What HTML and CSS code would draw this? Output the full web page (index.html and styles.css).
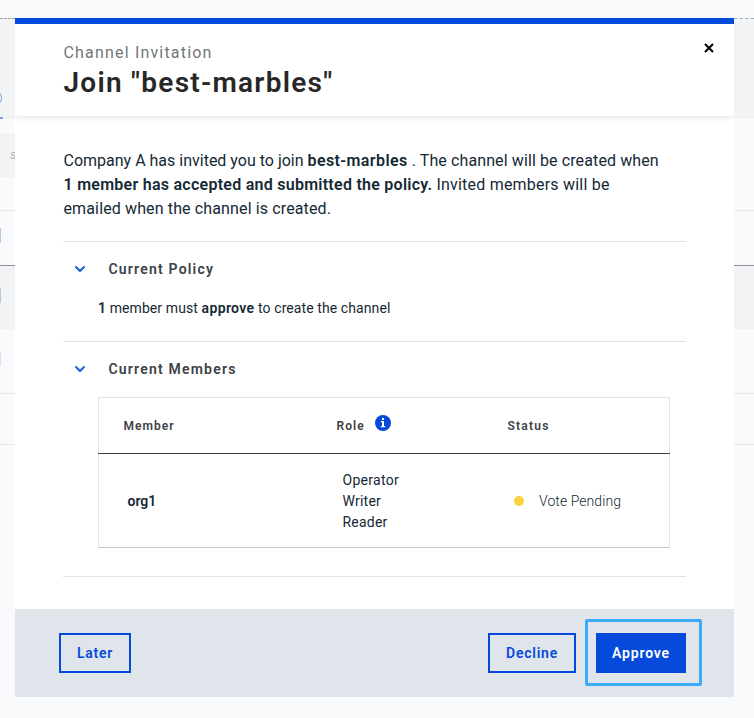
FILE: index.html
```html
<!DOCTYPE html>
<html lang="en">
<head>
<meta charset="utf-8">
<title>Channel Invitation</title>
<link rel="stylesheet" href="styles.css">
</head>
<body>
<div class="page">
  <div class="edge edge-left" aria-hidden="true">
    <div class="band band-nav"><i class="ring"></i><i class="tab-line"></i></div>
    <div class="band band-gap"></div>
    <div class="band band-search shaded"><em>s</em></div>
    <div class="band band-head ruled"></div>
    <div class="band band-row dark-ruled"><i class="chip"></i></div>
    <div class="band band-active shaded"><i class="chip"></i></div>
    <div class="band band-last ruled"><i class="chip faint"></i></div>
    <div class="band band-foot ruled"></div>
  </div>

  <section class="modal" role="dialog" aria-labelledby="title">
    <header class="modal-header">
      <div>
        <p class="eyebrow">Channel Invitation</p>
        <h1 id="title">Join "best-marbles"</h1>
      </div>
      <button class="close" aria-label="Close">
        <svg width="10" height="10" viewBox="0 0 10 10"><path d="M1 1l8 8M9 1L1 9"/></svg>
      </button>
    </header>

    <div class="modal-body">
      <p class="intro">Company A has invited you to join <b class="channel">best-marbles</b><span class="created"> . The channel will be created when</span><br><b>1 member has accepted and submitted the policy.</b><span class="invited"> Invited members will be</span><br><span class="emailed">emailed when the channel is created.</span></p>

      <section class="panel panel-policy">
        <h2><svg class="chevron" width="12" height="8" viewBox="0 0 12 8"><path d="M1.500 1.500L6 6l4.500-4.500"/></svg>Current Policy</h2>
        <p class="policy"><b>1</b> member must <b class="verb">approve</b> to create the channel</p>
      </section>

      <section class="panel panel-members">
        <h2><svg class="chevron" width="12" height="8" viewBox="0 0 12 8"><path d="M1.500 1.500L6 6l4.500-4.500"/></svg>Current Members</h2>
        <div class="members">
          <div class="row head">
            <span>Member</span>
            <span class="role-head">Role
              <svg class="info" width="16" height="16" viewBox="0 0 16 16"><circle cx="8" cy="8" r="8"/><path d="M7 3h2v2H7zM6 6h3v5h1.200v1.200H5.800V11H7V7.200H6z"/></svg>
            </span>
            <span class="status-head">Status</span>
          </div>
          <div class="row entry">
            <b>org1</b>
            <ul class="roles"><li class="operator">Operator</li><li>Writer</li><li>Reader</li></ul>
            <span class="status"><i class="dot"></i>Vote Pending</span>
          </div>
        </div>
      </section>
    </div>

    <footer class="modal-footer">
      <button class="btn later">Later</button>
      <div class="actions">
        <button class="btn decline">Decline</button>
        <button class="btn primary">Approve</button>
      </div>
    </footer>
  </section>

  <div class="edge" aria-hidden="true">
    <div class="band band-nav"></div>
    <div class="band band-gap"></div>
    <div class="band band-search"></div>
    <div class="band band-head ruled"></div>
    <div class="band band-row dark-ruled"></div>
    <div class="band band-active shaded"></div>
    <div class="band band-last ruled"></div>
    <div class="band band-foot ruled"></div>
  </div>
</div>
</body>
</html>
```
FILE: styles.css
```css
* { box-sizing: border-box; }
body {
  margin: 0;
  background: #f8fafc;
  color: #152935;
  font-family: Roboto, "Liberation Sans", sans-serif;
}
p, h1, h2, ul { margin: 0; padding: 0; }
b { font-weight: 600; }
button { font-family: inherit; border: 0; padding: 0; }

.page {
  display: grid;
  grid-template-columns: 15px 719px 20px;
  height: 718px;
  padding-top: 18px;
  overflow: hidden;
}

/* Dimmed page behind the dialog */
.edge { overflow: hidden; }
.band { overflow: hidden; }
.shaded { background: #f1f3f5; }
.ruled { border-bottom: 1px solid #e4e7ea; }
.dark-ruled { border-bottom: 1px solid #8d9196; }
.band-nav { height: 101px; background: #f1f3f5; border-top: 1px dashed #9da6ac; }
.band-gap { height: 14px; }
.band-search { height: 44px; padding: 14px 0 0 10px; color: #b5b2b0; font-size: 13px; line-height: 16px; }
.band-head { height: 34px; }
.band-row { height: 55px; padding-top: 17px; }
.band-active { height: 63px; padding-top: 22px; }
.band-last { height: 65px; padding-top: 22px; }
.band-foot { height: 51px; }
.ring { display: block; width: 10px; height: 12px; margin: 73px 0 0 -8px; border: 1.5px solid #7ba3ec; border-radius: 50%; }
.tab-line { display: block; width: 3px; height: 2px; margin-top: 13px; background: #7b9eea; }
.chip { display: block; width: 1px; height: 15px; background: #bcc6d7; }
.faint { background: #dce1ea; }

.modal { height: 679px; background: #fff; border-top: 6px solid #054ada; }
.modal-header {
  display: flex;
  justify-content: space-between;
  height: 92px;
  padding: 18px 20px 0 48.5px;
  box-shadow: 0 1px 6px rgba(40, 55, 70, .14);
  clip-path: inset(0 0 -8px 0);
}
.eyebrow { color: #6f7878; font-size: 16px; line-height: 21px; letter-spacing: 1.18px; }
h1 { color: #272727; font-size: 28px; line-height: 39px; font-weight: 600; letter-spacing: 1.26px; }
.close { display: flex; width: 10px; height: 10px; margin-top: 1px; background: none; }
.close path { fill: none; stroke: #000; stroke-width: 2; }

.modal-body { height: 493px; padding: 33px 48px 0; }
.intro { padding-left: .5px; font-size: 16px; line-height: 24px; white-space: nowrap; }
.intro b { letter-spacing: .26px; }
.intro .channel { letter-spacing: .39px; }
.created { letter-spacing: .11px; }
.invited { letter-spacing: .21px; }
.emailed { letter-spacing: .13px; }

.panel { border-top: 1px solid #dfe3e6; }
.panel-policy { height: 100px; margin-top: 20px; }
.panel-members { height: 236px; border-bottom: 1px solid #dfe3e6; }
h2 {
  display: flex;
  align-items: center;
  gap: 22.5px;
  height: 54px;
  margin-bottom: 1px;
  padding-left: 11px;
  color: #3c4146;
  font-size: 14px;
  font-weight: 600;
  letter-spacing: 1.2px;
}
.chevron path { fill: none; stroke: #1f5ce0; stroke-width: 2; }
.policy { padding-left: 35px; font-size: 14px; line-height: 23px; letter-spacing: .09px; }
.policy .verb { letter-spacing: .37px; }

.members { width: 572px; height: 151px; margin-left: 35px; border: 1px solid #dfe3e6; border-bottom-color: #c5c9cc; }
.row { display: grid; grid-template-columns: 213px 171px 1fr; align-items: center; }
.head {
  height: 56px;
  margin: 0 -1px;
  padding-left: 25.5px;
  border-bottom: 1px solid #3d3f48;
  color: #3c4146;
  font-size: 12px;
  font-weight: 600;
  letter-spacing: 1.05px;
}
.role-head { display: flex; align-items: center; gap: 10.5px; }
.status-head { letter-spacing: 1.22px; }
.info { margin-top: -5px; fill: #054ada; }
.info path { fill: #fff; }
.entry { height: 93px; padding-left: 28.5px; grid-template-columns: 215px 171.5px 1fr; font-size: 14px; }
.roles { padding-top: 2px; list-style: none; line-height: 21px; letter-spacing: .22px; }
.operator { letter-spacing: .3px; }
.status { display: flex; align-items: center; gap: 15px; font-weight: 300; letter-spacing: .07px; }
.dot { width: 10px; height: 10px; border-radius: 50%; background: #fdd13a; }

.modal-footer { display: flex; justify-content: space-between; height: 88px; padding: 24px 48px 24px 44px; background: #dfe5eb; }
.actions { display: flex; gap: 20px; }
.btn {
  position: relative;
  width: 88px;
  height: 40px;
  border: 2px solid #054ada;
  background: none;
  color: #054ada;
  font-size: 14px;
  font-weight: 600;
  letter-spacing: .77px;
}
.later { width: 72px; }
.primary { width: 90px; background: #054ada; color: #fff; letter-spacing: .85px; }
.primary::after {
  content: "";
  position: absolute;
  inset: -16px -18px -15px -13px;
  border: 3px solid #3caafb;
  border-radius: 2px;
}
```
